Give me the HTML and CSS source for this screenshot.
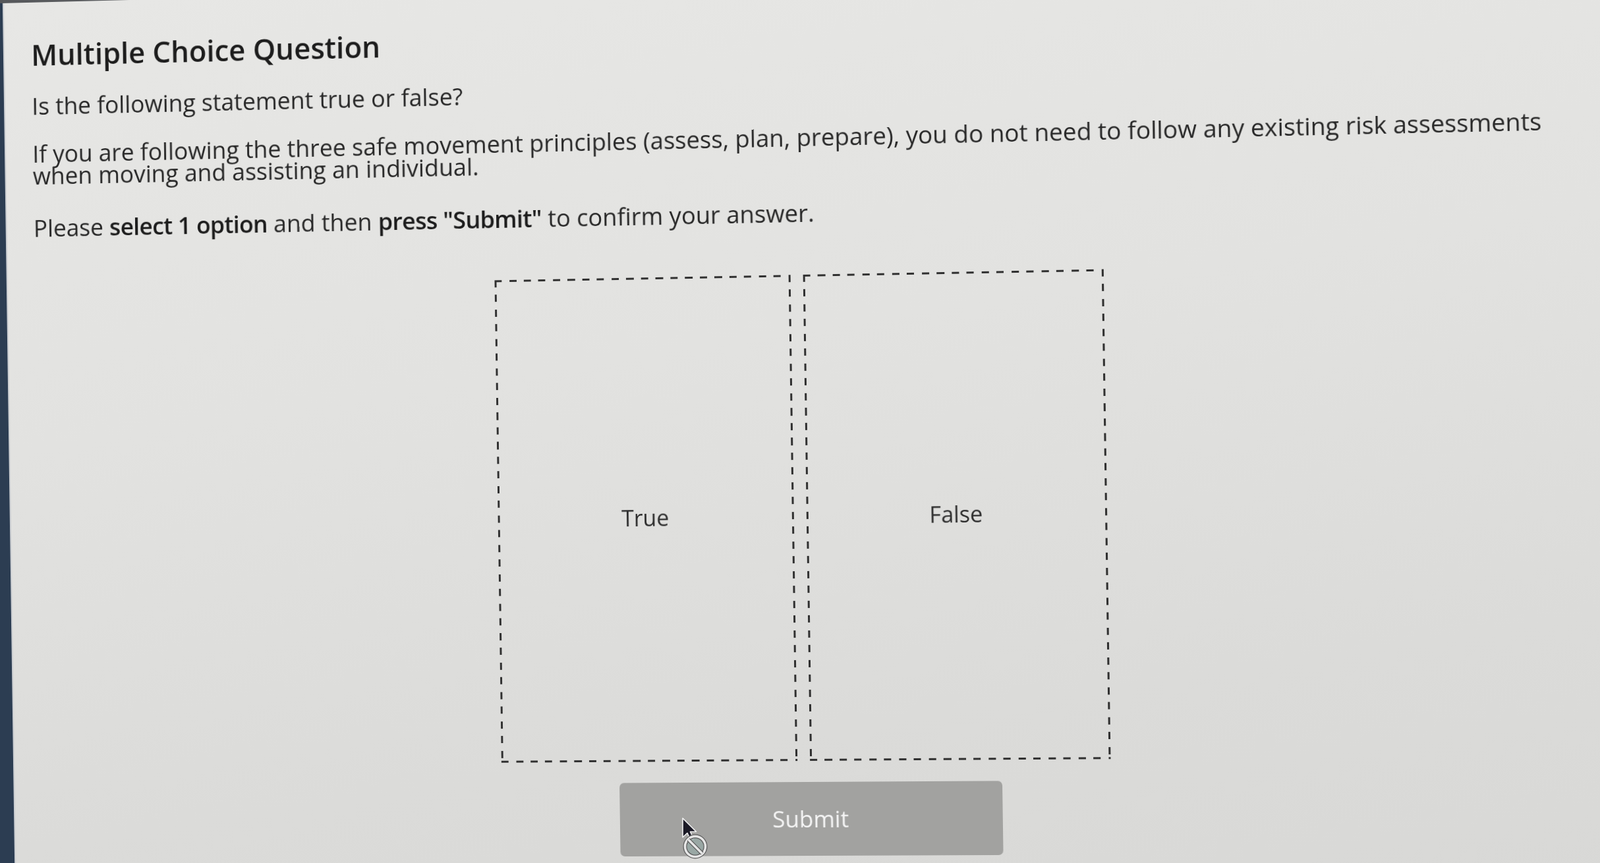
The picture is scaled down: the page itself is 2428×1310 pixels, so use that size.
FILE: index.html
```html
<!DOCTYPE html>
<html lang="en">
<head>
<meta charset="utf-8">
<title>Multiple Choice Question</title>
<link rel="stylesheet" href="styles.css">
</head>
<body>
  <div class="screen">
    <aside class="sidebar"></aside>
    <main class="panel">
      <h1 class="title">Multiple Choice Question</h1>
      <p class="text prompt">Is the following statement true or false?</p>
      <p class="text statement">If you are following the three safe movement principles (assess, plan, prepare), you do not need to follow any existing risk assessments when moving and assisting an individual.</p>
      <p class="text instruction">Please <strong>select 1 option</strong> and then <strong>press "Submit"</strong> to confirm your answer.</p>
      <div class="options">
        <button class="option" type="button">True</button>
        <button class="option" type="button">False</button>
      </div>
      <div class="actions">
        <button class="submit" type="button" disabled>Submit</button>
      </div>
    </main>
  </div>
  <svg class="cursor" width="50" height="76" viewBox="0 0 50 76" aria-hidden="true">
    <path d="M8 8 V37 L15 30.5 L20 41.5 L24.5 39.5 L19.5 28.5 H28.5 Z" fill="#1b1a26" stroke="#f2f2f2" stroke-width="1.6" stroke-linejoin="round"/>
    <circle cx="27" cy="51" r="15.5" fill="rgba(150,168,166,0.75)" stroke="#5e5e5e" stroke-width="6"/>
    <circle cx="27" cy="51" r="15.5" fill="none" stroke="#e6e6e6" stroke-width="3.5"/>
    <line x1="16.6" y1="40.6" x2="37.4" y2="61.4" stroke="#5e5e5e" stroke-width="6"/>
    <line x1="16.6" y1="40.6" x2="37.4" y2="61.4" stroke="#e6e6e6" stroke-width="3.5"/>
  </svg>
</body>
</html>
```

FILE: styles.css
```css
html, body {
  margin: 0;
  height: 100%;
}

body {
  position: relative;
  overflow: hidden;
  background: #2c3d52;
  font-family: "Open Sans", "Noto Sans", sans-serif;
}

.screen {
  display: flex;
  box-sizing: border-box;
  width: 2548px;
  height: 1430px;
  margin: -60px 0 0 -60px;
  padding-top: 34px;
  background: linear-gradient(90deg, #55575a 0%, #6a6c6f 30%, #8a8c8f 60%);
  transform-origin: 1274px 715px;
  transform: perspective(2000px) rotateY(-1.9deg) rotate(-0.82deg);
}

.sidebar {
  flex: 0 0 48px;
  background: #2c3d52;
  border-right: 2px solid #c9ccd0;
}

.panel {
  flex: 1;
  padding: 53.5px 95.5px 0 42px;
  background: linear-gradient(172deg, #e7e7e5 0%, #e2e2e0 40%, #dbdbd9 75%, #d8d8d6 100%);
  color: #282828;
}

.title {
  margin: 0 0 35px;
  font-size: 45px;
  line-height: 54px;
  font-weight: 600;
  color: #1d1d1d;
}

.text {
  max-width: 2330px;
  margin: 0;
  font-size: 36.6px;
  line-height: 34px;
  font-weight: 400;
}

.prompt {
  margin-bottom: 40.5px;
}

.statement {
  margin-bottom: 46.5px;
}

.text strong {
  font-weight: 600;
  letter-spacing: -0.7px;
  color: #1d1d1d;
}

.options {
  display: flex;
  justify-content: center;
  gap: 19px;
  margin-top: 77px;
}

.option {
  display: flex;
  align-items: center;
  justify-content: center;
  box-sizing: border-box;
  width: 453px;
  height: 738px;
  padding: 0 0 6px;
  border: 0;
  background:
    repeating-linear-gradient(90deg, #303030 0 11px, transparent 11px 22.5px) left top / 100% 3px no-repeat,
    repeating-linear-gradient(90deg, #303030 0 11px, transparent 11px 22.5px) left bottom / 100% 3px no-repeat,
    repeating-linear-gradient(180deg, #303030 0 11px, transparent 11px 22.5px) left top / 3px 100% no-repeat,
    repeating-linear-gradient(180deg, #303030 0 11px, transparent 11px 22.5px) right top / 3px 100% no-repeat;
  font-family: "Open Sans", "Noto Sans", sans-serif;
  font-size: 34px;
  font-weight: 400;
  color: #2e2e2e;
}

.actions {
  display: flex;
  justify-content: center;
  padding-left: 19px;
  margin-top: 32px;
}

.submit {
  width: 581px;
  height: 112px;
  border: 0;
  border-radius: 7px;
  background: #a2a2a0;
  color: #f5f5f5;
  font-family: "Open Sans", "Noto Sans", sans-serif;
  font-size: 35px;
  font-weight: 400;
}

.cursor {
  position: absolute;
  left: 1028px;
  top: 1234px;
}
```
